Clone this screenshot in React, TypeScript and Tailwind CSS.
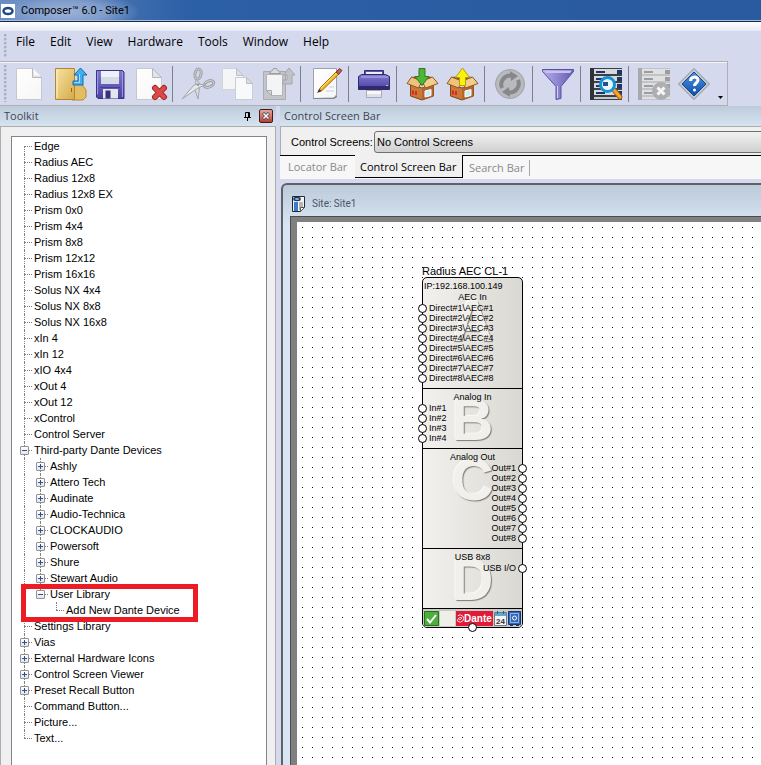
import type { ReactNode } from "react"

type TreeItem = {
  label: string
  children?: TreeItem[]
  open?: boolean
  highlighted?: boolean
}

const leaf = (label: string): TreeItem => ({ label })
const closed = (label: string): TreeItem => ({ label, children: [] })

const toolkit: TreeItem[] = [
  leaf("Edge"),
  leaf("Radius AEC"),
  leaf("Radius 12x8"),
  leaf("Radius 12x8 EX"),
  leaf("Prism 0x0"),
  leaf("Prism 4x4"),
  leaf("Prism 8x8"),
  leaf("Prism 12x12"),
  leaf("Prism 16x16"),
  leaf("Solus NX 4x4"),
  leaf("Solus NX 8x8"),
  leaf("Solus NX 16x8"),
  leaf("xIn 4"),
  leaf("xIn 12"),
  leaf("xIO 4x4"),
  leaf("xOut 4"),
  leaf("xOut 12"),
  leaf("xControl"),
  leaf("Control Server"),
  {
    label: "Third-party Dante Devices",
    open: true,
    children: [
      closed("Ashly"),
      closed("Attero Tech"),
      closed("Audinate"),
      closed("Audio-Technica"),
      closed("CLOCKAUDIO"),
      closed("Powersoft"),
      closed("Shure"),
      closed("Stewart Audio"),
      {
        label: "User Library",
        open: true,
        highlighted: true,
        children: [leaf("Add New Dante Device")],
      },
    ],
  },
  leaf("Settings Library"),
  closed("Vias"),
  closed("External Hardware Icons"),
  closed("Control Screen Viewer"),
  closed("Preset Recall Button"),
  leaf("Command Button..."),
  leaf("Picture..."),
  leaf("Text..."),
]

function Grip() {
  return (
    <div className="w-[3px] self-stretch my-[3px] bg-[radial-gradient(circle_at_1px_1px,#a9aec0_1px,transparent_2px)] bg-[size:3px_4px]" />
  )
}

/* ---------- toolbar icons ---------- */

function Icon({ children }: { children: ReactNode }) {
  return (
    <svg viewBox="0 0 34 32" className="w-[34px] h-8 overflow-visible" aria-hidden="true">
      {children}
    </svg>
  )
}

function NewIcon() {
  return (
    <Icon>
      <path d="M3.5.5h16l9 9v22h-25z" fill="url(#paper)" stroke="#c6c8cc" />
      <path d="M19.5.5v9h9z" fill="#e2e4e6" stroke="#b6b8bd" />
      <path d="M20 .5l8.5 8.5c-3-2-5-2-7-1.500z" fill="#fbfbfb" />
    </Icon>
  )
}

function OpenIcon() {
  return (
    <Icon>
      <path d="M20 15h9l1 3 3 4v7l-3 3h-11z" fill="#e2bd63" stroke="#b68a2e" />
      <path d="M2.500.5h19v31h-19z" fill="url(#folder)" stroke="#b1862f" />
      <path d="M4 2v28" stroke="#fff3c6" />
      <path d="M18.500 20v4" stroke="#8d6a20" />
      <path d="M20 17v-4h5V7h-4l6.500-7L34 7h-4v10z" fill="#3db1f0" stroke="#1769ae" />
      <path d="M21.500 14.500h5V6" stroke="#9be0ff" fill="none" />
    </Icon>
  )
}

function SaveIcon() {
  return (
    <Icon>
      <path d="M3.500 2.500h26l1.500 1.500v26.500h-26l-1.500-1.500z" fill="url(#violet)" stroke="#3c3285" />
      <path d="M8 3h18v13H8z" fill="#eef1f7" />
      <path d="M8 9h18v7H8z" fill="#d3dbe8" />
      <path d="M4.500 3.500v23M29.500 4v25" stroke="#9d96e0" />
      <path d="M10 21h15v9.500H10z" fill="#e4e6ee" />
      <path d="M12.500 22.500h5v8h-5z" fill="#37307c" />
      <path d="M7 19.500h20" stroke="#463b98" />
    </Icon>
  )
}

function DeleteIcon() {
  return (
    <Icon>
      <path d="M3.500.5h16l9 9v22h-25z" fill="url(#paper)" stroke="#c6c8cc" />
      <path d="M19.500.5v9h9z" fill="#e2e4e6" stroke="#b6b8bd" />
      <path d="M22 20l9 9M31 20l-9 9" stroke="#a02526" strokeWidth="6" strokeLinecap="round" />
      <path d="M22 20l9 9M31 20l-9 9" stroke="#dc4a48" strokeWidth="4" strokeLinecap="round" />
    </Icon>
  )
}

function CutIcon() {
  return (
    <Icon>
      <g fill="none" stroke="#9c9ea3" strokeWidth="3">
        <ellipse cx="17" cy="6" rx="3" ry="5" transform="rotate(12 17 6)" />
        <ellipse cx="28" cy="16" rx="5" ry="3" transform="rotate(-24 28 16)" />
      </g>
      <g fill="none" stroke="#d0d2d6" strokeWidth="1">
        <ellipse cx="17" cy="6" rx="3" ry="5" transform="rotate(12 17 6)" />
        <ellipse cx="28" cy="16" rx="5" ry="3" transform="rotate(-24 28 16)" />
      </g>
      <path d="M15 11l4 5-2 15-3-9z" fill="#d9dbde" stroke="#a4a6ab" />
      <path d="M24 17l-7 3L1 31l12-14 4-1z" fill="#e6e7ea" stroke="#a4a6ab" />
      <circle cx="17" cy="17" r="1" fill="#85878c" />
    </Icon>
  )
}

function CopyIcon() {
  return (
    <Icon>
      <path d="M1.500.5h14l7 7v14h-21z" fill="#f4f5f7" stroke="#d0d2d8" />
      <path d="M15.500.5v7h7z" fill="#dcdde1" stroke="#c0c2c8" />
      <path d="M14.500 9.500h11l6 6v16h-17z" fill="#f8f9fa" stroke="#cbcdd3" />
      <path d="M25.500 9.500v6h6z" fill="#dcdde1" stroke="#bcbec4" />
    </Icon>
  )
}

function PasteIcon() {
  return (
    <Icon>
      <path d="M2.500 3.500h22v28h-22z" fill="#c3c5c9" stroke="#a9abb0" />
      <path d="M5.500 6.500h16v21h-11l-5-5z" fill="#f3f4f5" stroke="#b2b4b9" />
      <path d="M5.500 22.500h5v5z" fill="#d6d8db" stroke="#a5a7ac" />
      <path d="M8.500 5.500l2-3h1l1-2h3l1 2h1l2 3z" fill="#d9dadd" stroke="#9b9da2" />
      <path d="M22 16v-4h4V7h-3.500L28 0l6 7h-3v9z" fill="#c0c2c6" stroke="#a4a6ab" />
    </Icon>
  )
}

function NoteIcon() {
  return (
    <Icon>
      <path d="M4.500.5h23v26c-1 3-3 4-6 3.500l-17 .5z" fill="url(#paper)" stroke="#9fa1a8" />
      <path d="M4 30h20l4-3v2l-3 2H4z" fill="#85878e" />
      <path d="M20 19h5M17 23h8" stroke="#c5cff0" />
      <path d="M10 24l1-4L28 3l2.500 2.500L13 22.500z" fill="#f7b824" stroke="#a36a14" />
      <path d="M12 20L28 4.500" stroke="#ffe480" />
      <path d="M8 25l2-4 2.500 2z" fill="#3c3834" />
      <path d="M27 4l3.500-3.500 2.500 2-3.500 4z" fill="#bd5b55" stroke="#7d3533" />
    </Icon>
  )
}

function PrintIcon() {
  return (
    <Icon>
      <path d="M7.500 2.500h19v8h-19z" fill="#5b54a8" stroke="#332b73" />
      <path d="M9 4h16v5H9z" fill="#eceef6" />
      <path d="M1.500 8.500l3-2h24l4 2v13h-31z" fill="url(#violet)" stroke="#2f2968" />
      <path d="M4 9h27" stroke="#b4aff0" />
      <path d="M2 18h30v3H2z" fill="#312a73" />
      <path d="M9.500 22.500h15v7h-15z" fill="#f8f8fb" stroke="#a7a9b6" />
      <path d="M10 26h14v3H10z" fill="#dfe1e8" />
      <path d="M29 17h2v1h-2z" fill="#9ae06b" />
    </Icon>
  )
}

function BoxIcon({ up }: { up?: boolean }) {
  return (
    <Icon>
      <path d="M6 9l11-1 11 1v8H6z" fill="#8d5220" />
      <path d="M5.500 16.500L17 20l11.500-3.500V28L17 32 5.500 28z" fill="#c9793a" stroke="#7e4517" />
      <path d="M17 20l11.500-3.500V28L17 32z" fill="#b3652b" />
      <path d="M17 13L6.500 9 2 15.500l11.500 4.500z" fill="#efc27d" stroke="#90591f" />
      <path d="M17 13l10.500-4 5.500 6.500L20.500 20z" fill="#f3cd8e" stroke="#90591f" />
      <path d="M8 22.500v4M11 23v4" stroke="#e2271f" strokeWidth="2" />
      <path d="M20 23l6-1.500v6L20 29z" fill="#c9ecfa" stroke="#fff" />
      {up ? (
        <path d="M14.500 17.500v-8h-4L17.500 0l7 9.500h-4v8z" fill="#fdf10c" stroke="#b0a010" />
      ) : (
        <path d="M14 .5h6v8h4L17 17.500 10 8.500h4z" fill="#4fb536" stroke="#2b7a1d" />
      )}
    </Icon>
  )
}

function RefreshIcon() {
  return (
    <Icon>
      <circle cx="17" cy="16" r="14.500" fill="#b8babd" stroke="#a0a2a6" />
      <path d="M9 20a9 9 0 0 1 9-12.500" fill="none" stroke="#85878b" strokeWidth="4" />
      <path d="M17 3l8 5-7 5z" fill="#85878b" />
      <path d="M25 12a9 9 0 0 1-9 12.500" fill="none" stroke="#85878b" strokeWidth="4" />
      <path d="M17 29l-8-5 7-5z" fill="#85878b" />
    </Icon>
  )
}

function FilterIcon() {
  return (
    <Icon>
      <path d="M1.500 1.500h31v2L20 18.500v12l-5 1v-13L1.500 3.500z" fill="url(#lilac)" stroke="#5b51a0" />
      <path d="M3 2.500h28l-2 2.500H5z" fill="#c7c2f0" />
      <path d="M16.500 18v12" stroke="#d4d0f8" />
    </Icon>
  )
}

function RackIcon({ muted }: { muted?: boolean }) {
  const bar = muted ? "#9c9da0" : "#1f3566"
  return (
    <Icon>
      <path d="M1 0h32v32H1z" fill={muted ? "#c2c3c6" : "#3d4045"} />
      <path d="M1 0h4v32H1z" fill={muted ? "#a8a9ac" : "#303236"} />
      {[1, 8, 15, 22].map((y) => (
        <g key={y}>
          <path d={`M5 ${y}h28v5H5z`} fill={muted ? "#dfe0e2" : "#d5d8dd"} />
          <path d={`M7 ${y + 2}h9v2H7zM28 ${y + 1}h5v4h-5z`} fill={bar} />
        </g>
      ))}
      <path d="M5 29h28v2H5z" fill={muted ? "#dfe0e2" : "#c3c7ce"} />
      {muted ? (
        <>
          <circle cx="24" cy="23" r="9" fill="#adaeb1" />
          <path d="M20.500 19.500l7 7M27.500 19.500l-7 7" stroke="#f6f6f6" strokeWidth="3" />
        </>
      ) : (
        <>
          <path d="M25 22l6 7" stroke="#a35e12" strokeWidth="5" strokeLinecap="round" />
          <path d="M25 22l6 7" stroke="#f5a42e" strokeWidth="3" strokeLinecap="round" />
          <circle cx="18.500" cy="16.500" r="7" fill="#e8f7fe" stroke="#1394da" strokeWidth="3" />
          <path d="M14 14h5v4h-5z" fill="#2a4f86" />
        </>
      )}
    </Icon>
  )
}

function HelpIcon() {
  return (
    <Icon>
      <path d="M17 .5L32.500 16 17 31.500 1.500 16z" fill="#c3c8cf" stroke="#8b9098" />
      <path d="M17 4l12 12-12 12L5 16z" fill="url(#help)" stroke="#11438f" />
      <path
        d="M13.500 13c0-5 7.500-5 7.500-1 0 3-3.500 3-3.500 6"
        fill="none"
        stroke="#fff"
        strokeWidth="3"
      />
      <circle cx="17.500" cy="22" r="1.500" fill="#fff" />
    </Icon>
  )
}

const tools: { name: string; icon: ReactNode }[][] = [
  [
    { name: "New", icon: <NewIcon /> },
    { name: "Open", icon: <OpenIcon /> },
    { name: "Save", icon: <SaveIcon /> },
    { name: "Delete", icon: <DeleteIcon /> },
  ],
  [
    { name: "Cut", icon: <CutIcon /> },
    { name: "Copy", icon: <CopyIcon /> },
    { name: "Paste", icon: <PasteIcon /> },
  ],
  [{ name: "Properties", icon: <NoteIcon /> }],
  [{ name: "Print", icon: <PrintIcon /> }],
  [
    { name: "Receive", icon: <BoxIcon /> },
    { name: "Send", icon: <BoxIcon up /> },
  ],
  [{ name: "Refresh", icon: <RefreshIcon /> }],
  [{ name: "Filter", icon: <FilterIcon /> }],
  [{ name: "Find devices", icon: <RackIcon /> }],
  [
    { name: "Remove devices", icon: <RackIcon muted /> },
    { name: "Help", icon: <HelpIcon /> },
  ],
]

// gradients shared by the toolbar icons
function Gradients() {
  return (
    <svg className="absolute w-0 h-0" aria-hidden="true">
      <defs>
        <linearGradient id="paper" x1="0" y1="0" x2="1" y2="1">
          <stop offset="0" stopColor="#ffffff" />
          <stop offset="1" stopColor="#f6f6f7" />
        </linearGradient>
        <linearGradient id="folder" x1="0" y1="0" x2="1" y2="1">
          <stop offset="0" stopColor="#f6e3a1" />
          <stop offset="1" stopColor="#d6ab4a" />
        </linearGradient>
        <linearGradient id="violet" x1="0" y1="0" x2="0" y2="1">
          <stop offset="0" stopColor="#8179d2" />
          <stop offset="1" stopColor="#4a419f" />
        </linearGradient>
        <linearGradient id="lilac" x1="0" y1="0" x2="1" y2="0">
          <stop offset="0" stopColor="#b5aeea" />
          <stop offset="1" stopColor="#655bb4" />
        </linearGradient>
        <linearGradient id="help" x1="0" y1="0" x2="0" y2="1">
          <stop offset="0" stopColor="#4f93e0" />
          <stop offset="1" stopColor="#0d50ae" />
        </linearGradient>
      </defs>
    </svg>
  )
}

function Toolbar() {
  return (
    <div className="flex">
      <div
        role="toolbar"
        aria-label="Standard"
        className="flex items-stretch h-[45px] pl-1 pr-1 border-y border-r border-[#b0b0b4] shadow-[inset_0_1px_0_#f4f6fb]"
      >
        <Grip />
        <div className="flex items-center ml-[3px]">
          {tools.map((group, i) => (
            <div key={i} className="flex items-center">
              {i > 0 && <div className="w-px h-9 ml-[2px] mr-[5px] bg-[#7d808c]" />}
              {group.map((tool) => (
                <button
                  key={tool.name}
                  type="button"
                  aria-label={tool.name}
                  className="flex items-center justify-center w-10 h-10"
                >
                  {tool.icon}
                </button>
              ))}
            </div>
          ))}
        </div>
        <button type="button" aria-label="Toolbar options" className="flex items-end pl-1 pb-[6px]">
          <svg viewBox="0 0 5 3" className="w-[5px] h-[3px]" aria-hidden="true">
            <path d="M0 0h5L2.500 3z" fill="#000" />
          </svg>
        </button>
      </div>
    </div>
  )
}

/* ---------- toolkit tree ---------- */

function GuideCell({ item, last, first }: { item?: TreeItem; last?: boolean; first?: boolean }) {
  return (
    <span className="relative w-4 h-4 shrink-0">
      <span
        className={`absolute left-2 border-l border-dotted border-[#808080] ${first ? "top-2" : "top-0"} ${
          last ? "h-2" : "bottom-0"
        }`}
      />
      {item && <span className="absolute left-2 top-2 w-2 border-t border-dotted border-[#808080]" />}
      {item?.children && (
        <button
          type="button"
          aria-label={`${item.open ? "Collapse" : "Expand"} ${item.label}`}
          className="absolute left-1 top-1 w-[9px] h-[9px] border border-[#919191] rounded-[1px] bg-linear-to-b from-white to-[#e4e4e4]"
        >
          <span className="absolute left-px right-px top-[3px] h-px bg-[#2f4d9e]" />
          {!item.open && <span className="absolute top-px bottom-px left-[3px] w-px bg-[#2f4d9e]" />}
        </button>
      )}
    </span>
  )
}

function Tree({ items, guides = [] }: { items: TreeItem[]; guides?: boolean[] }) {
  return (
    <ul>
      {items.map((item, i) => {
        const last = i === items.length - 1
        return (
          <li key={item.label} className="relative">
            <div className="flex h-4">
              {guides.map((line, g) =>
                line ? <GuideCell key={g} /> : <span key={g} className="w-4 h-4 shrink-0" />
              )}
              <GuideCell item={item} last={last} first={i === 0 && guides.length === 0} />
              <span className="pl-[2px] whitespace-nowrap">{item.label}</span>
            </div>
            {item.open && item.children && <Tree items={item.children} guides={[...guides, !last]} />}
            {item.highlighted && (
              <div className="absolute left-[5px] -top-[2px] -bottom-1 w-[177px] border-[5px] border-[#ed1c24] pointer-events-none z-10" />
            )}
          </li>
        )
      })}
    </ul>
  )
}

function PanelHeader({ title, children }: { title: string; children?: ReactNode }) {
  return (
    <div className="flex items-center h-5 pl-1 pr-[3px] bg-linear-to-b from-[#bdcbda] to-[#d6e3f1] text-[#3f4654] ui">
      <h2 className="flex-1 text-[11px] leading-5 whitespace-nowrap">{title}</h2>
      {children}
    </div>
  )
}

function Toolkit() {
  return (
    <aside className="flex flex-col w-[276px] shrink-0">
      <PanelHeader title="Toolkit">
        <button type="button" aria-label="Auto hide" className="mr-[7px]">
          <svg viewBox="0 0 9 9" className="w-[9px] h-[9px]" aria-hidden="true">
            <path d="M2.500 5.500v-5h4v5M5.500 0v5M1 5.500h7M4.500 6v3" fill="none" stroke="#000" />
          </svg>
        </button>
        <button
          type="button"
          aria-label="Close"
          className="flex items-center justify-center w-[14px] h-[14px] rounded-[2px] border border-[#4a1420] bg-linear-to-b from-[#e3a79b] to-[#b8412d]"
        >
          <svg viewBox="0 0 8 8" className="w-2 h-2" aria-hidden="true">
            <path d="M1 1l6 6M7 1L1 7" stroke="#4a4a58" strokeWidth="3" />
            <path d="M1.500 1.500l5 5M6.500 1.500l-5 5" stroke="#fff" strokeWidth="1.500" />
          </svg>
        </button>
      </PanelHeader>
      <div className="flex flex-1 flex-col bg-[#f0f0f0] border-t border-x border-[#adadad] pt-[9px] pl-[10px] pr-2">
        <nav className="flex-1 border border-b-0 border-[#828290] bg-white pl-1 pt-px text-[11px] leading-4 text-black">
          <Tree items={toolkit} />
        </nav>
      </div>
    </aside>
  )
}

/* ---------- device block on the canvas ---------- */

function Port({ label, out }: { label: string; out?: boolean }) {
  return (
    <li className={`flex items-center h-[10px] gap-[2px] ${out ? "flex-row-reverse -mr-[5px]" : "-ml-[5px]"}`}>
      <span className="w-[9px] h-[9px] shrink-0 rounded-full border border-black bg-white" />
      <span className="whitespace-nowrap">{label}</span>
    </li>
  )
}

function Block({
  title,
  letter,
  ports,
  out,
  address,
}: {
  title: string
  letter: string
  ports: string[]
  out?: boolean
  address?: string
}) {
  return (
    <section className={`relative border-b border-black pb-[5px] min-h-[60px] ${address ? "pt-[3px]" : "pt-[2px]"}`}>
      <span
        aria-hidden="true"
        className={`absolute inset-x-0 text-center font-bold text-[58px] leading-[58px] text-[#f1f0ec] [text-shadow:1px_1px_1px_#7d7b76,-1px_-1px_0_#faf9f7] ${
          address ? "top-[14px]" : "top-[2px]"
        }`}
      >
        {letter}
      </span>
      <div className="relative">
        {address && <p className="pl-px leading-[11px] whitespace-nowrap">IP:{address}</p>}
        <h3 className={`text-center ${address ? "leading-[11px]" : "leading-[12px]"}`}>{title}</h3>
        <ul>
          {ports.map((p) => (
            <Port key={p} label={p} out={out} />
          ))}
        </ul>
      </div>
    </section>
  )
}

const range = (n: number) => Array.from({ length: n }, (_, i) => i + 1)

function Device() {
  return (
    <article className="absolute left-[125px] top-[44px] w-[101px] text-black">
      <h2 className="text-[11px] leading-[11px] whitespace-nowrap">Radius AEC CL-1</h2>
      <div className="relative border border-black rounded-[5px] bg-linear-to-r from-[#f2f1ee] to-[#dad8d2] text-[9px] leading-[10px]">
        <Block
          title="AEC In"
          letter="A"
          address="192.168.100.149"
          ports={range(8).map((n) => `Direct#${n}\\AEC#${n}`)}
        />
        <Block title="Analog In" letter="B" ports={range(4).map((n) => `In#${n}`)} />
        <Block title="Analog Out" letter="C" ports={range(8).map((n) => `Out#${n}`)} out />
        <Block title="USB 8x8" letter="D" ports={["USB I/O"]} out />
        <div className="relative flex items-center h-[18px] px-px gap-px bg-[#c9c9c5] rounded-b-[4px]">
          <svg viewBox="0 0 15 15" className="w-[15px] h-[15px] shrink-0" aria-label="OK">
            <path d="M.5.5h14v14H.5z" fill="#4caf3c" stroke="#2b6b22" />
            <path d="M3 8l3 3.500L12 4" fill="none" stroke="#fff" strokeWidth="2" />
          </svg>
          <span className="w-[15px] h-[15px] bg-[#eef0e8]" />
          <span className="flex flex-1 items-center h-[15px] bg-[#e01a38] text-white">
            <svg viewBox="0 0 9 9" className="w-2 h-[9px] shrink-0" aria-hidden="true">
              <path d="M2 1.500a4 4 0 1 1 0 6M1.500 7.500C2 4 4 3 6 3.500c1 2-2 3-3 1.500" fill="none" stroke="#fff" />
            </svg>
            <span className="text-[10px] leading-[13px] font-bold">Dante</span>
          </span>
          <svg viewBox="0 0 13 15" className="w-[13px] h-[15px] shrink-0" aria-label="24">
            <path d="M.5 1.500h12v13H.5z" fill="#f4f4f4" stroke="#6b7b8a" />
            <path d="M1 2h11v3H1z" fill="#5da9d6" />
            <path d="M3.500 0v3M9.500 0v3" stroke="#2c5f86" />
            <text x="6.500" y="13" textAnchor="middle" fontSize="8" fontWeight="bold" fill="#333">
              24
            </text>
          </svg>
          <svg viewBox="0 0 13 15" className="w-[13px] h-[15px] shrink-0" aria-hidden="true">
            <path d="M.5.5h12v13H.5z" fill="#2f66b8" stroke="#16396f" />
            <path d="M2.500 2.500h8v9h-8z" fill="none" stroke="#8fb4e8" />
            <circle cx="6.500" cy="7" r="2" fill="none" stroke="#fff" />
            <path d="M2 14.500h3M8 14.500h3" stroke="#16396f" />
          </svg>
        </div>
        <span className="absolute left-[45px] -bottom-[5px] w-[9px] h-[9px] rounded-full border border-black bg-white" />
      </div>
    </article>
  )
}

function SiteWindow() {
  return (
    <section className="flex flex-col flex-1 mt-1 ml-px pl-[7px] rounded-tl-[6px] border-t-2 border-l-2 border-[#5f6167] bg-linear-to-b from-[#bccad9] to-[#d8e5f3] to-[40px]">
      <div className="flex items-center gap-[7px] h-[31px] pl-[2px] pt-[7px]">
        <svg viewBox="0 0 13 16" className="w-[13px] h-4" aria-hidden="true">
          <path d="M.5.5h12v11l-4 4h-8z" fill="#f4f4f4" stroke="#222833" />
          <path d="M1 1h8v4H1z" fill="#cfdcee" />
          <ellipse cx="5" cy="3" rx="3" ry="1.500" fill="none" stroke="#163a6c" strokeWidth="1.500" />
          <path d="M2 6h4v9H2z" fill="#3a7bcc" />
          <path d="M7 6h4v5l-2 3H7z" fill="#b8b6ad" />
          <path d="M8.500 15.500v-4h4z" fill="#fff" stroke="#555" />
        </svg>
        <h2 className="font-[Roboto,sans-serif] text-[10px] leading-4 text-[#4b5564]">Site: Site1</h2>
      </div>
      <div className="flex-1 flex border-t border-l border-[#4c4c4c] bg-[#808080] pt-[5px] pl-[6px]">
        <div className="relative flex-1 bg-white">
          <div className="absolute left-[5px] top-[5px] right-0 bottom-0 bg-[conic-gradient(from_270deg_at_1px_1px,#000_90deg,transparent_0)] bg-[size:10px_10px]" />
          <Device />
        </div>
      </div>
    </section>
  )
}

function ControlScreenBar() {
  return (
    <section>
      <PanelHeader title="Control Screen Bar" />
      <div className="flex items-center h-[29px] pl-[10px] border-t border-l border-[#adadad] bg-[#f0f0f0] text-[11px] text-black">
        <label htmlFor="control-screens" className="whitespace-nowrap pt-[2px]">
          Control Screens:
        </label>
        <select
          id="control-screens"
          className="flex-1 appearance-none h-[22px] ml-px -mr-2 mt-[2px] pl-[2px] rounded-[3px] border border-[#707070] bg-linear-to-b from-[#f2f2f2] to-[#d0d0d0]"
        >
          <option>No Control Screens</option>
        </select>
      </div>
      <div role="tablist" className="ui flex h-6 bg-[#f7f7f7] text-[11px] text-[#8a8a8a]">
        <button type="button" role="tab" className="w-[75px] pl-2 text-left whitespace-nowrap border-t border-black">
          Locator Bar
        </button>
        <button
          type="button"
          role="tab"
          aria-selected="true"
          className="h-[23px] w-[108px] pl-[5px] pt-[2px] text-left whitespace-nowrap border-b border-r border-black bg-[#f0f0f0] text-black"
        >
          Control Screen Bar
        </button>
        <div className="flex flex-1 items-center border-t border-black">
          <button type="button" role="tab" className="w-[67px] pl-[6px] h-4 text-left whitespace-nowrap border-r border-[#a8a8a8]">
            Search Bar
          </button>
        </div>
      </div>
    </section>
  )
}

const menus = ["File", "Edit", "View", "Hardware", "Tools", "Window", "Help"]

export default function App() {
  return (
    <div className="flex flex-col min-h-screen overflow-hidden bg-[#d4d9ed] font-['Liberation_Sans',Arial,sans-serif] [&_.ui]:font-['Open_Sans','Noto_Sans',sans-serif]">
      <Gradients />
      <header className="flex items-center h-[22px] pl-[1px] gap-[6px] border-b border-[#16294a] shadow-[inset_0_-1px_0_#a9bede] bg-[radial-gradient(ellipse_75px_20px_at_65px_12px,#9db3d8_0%,#7f9ccb_55%,transparent_100%),linear-gradient(90deg,#6a8cc0,#2b5fa6_25%,#2a5a9f)]">
        <svg viewBox="0 0 14 14" className="w-[14px] h-[14px]" aria-hidden="true">
          <path d="M0 0h14v14H0z" fill="#fff" />
          <ellipse cx="7" cy="7" rx="4.500" ry="3" fill="none" stroke="#214b7d" strokeWidth="2.500" />
        </svg>
        <h1 className="font-[Roboto,sans-serif] text-[11px] leading-5 pt-px text-black whitespace-nowrap">
          Composer™ 6.0 - Site1
        </h1>
      </header>
      <div className="h-[9px] bg-linear-to-b from-white to-[#e6eaf5]" />
      <div className="ui flex h-[30px] pl-1 text-[12px] text-black">
        <Grip />
        <nav className="flex items-start gap-[15px] pl-[9px] pt-[3px]">
          {menus.map((m) => (
            <button key={m} type="button" className="leading-4">
              {m}
            </button>
          ))}
        </nav>
      </div>
      <Toolbar />
      <main className="flex flex-1">
        <Toolkit />
        <div className="flex flex-col flex-1 min-w-0 ml-1">
          <ControlScreenBar />
          <SiteWindow />
        </div>
      </main>
    </div>
  )
}
